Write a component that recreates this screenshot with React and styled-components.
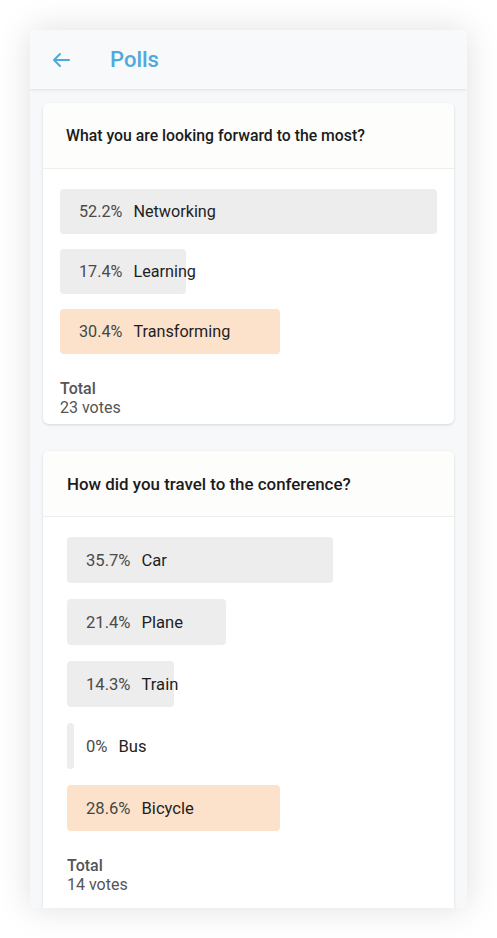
import React from "react";
import styled, { createGlobalStyle } from "styled-components";

const GlobalStyle = createGlobalStyle`
  html, body {
    margin: 0;
    padding: 0;
    background: #ffffff;
    font-family: Roboto, "Liberation Sans", Arial, sans-serif;
  }
`;

const polls = [
  {
    question: "What you are looking forward to the most?",
    votes: 23,
    pad: 17,
    headPad: 23,
    qSize: 15.8,
    textSize: 16.2,
    barHeight: 45,
    gap: 15,
    bottom: 7,
    maxWidth: 377,
    winner: "Transforming",
    options: [
      { label: "Networking", pct: 52.2 },
      { label: "Learning", pct: 17.4 },
      { label: "Transforming", pct: 30.4 },
    ],
  },
  {
    question: "How did you travel to the conference?",
    votes: 14,
    pad: 24,
    headPad: 24,
    qSize: 16.9,
    textSize: 16.6,
    barHeight: 46,
    gap: 16,
    bottom: 24,
    maxWidth: 266,
    winner: "Bicycle",
    options: [
      { label: "Car", pct: 35.7 },
      { label: "Plane", pct: 21.4 },
      { label: "Train", pct: 14.3 },
      { label: "Bus", pct: 0 },
      { label: "Bicycle", pct: 28.6 },
    ],
  },
];

const Page = styled.div`
  padding: 30px;
`;

const Phone = styled.div`
  width: 437px;
  height: 878px;
  overflow: hidden;
  background: #f7f8fa;
  box-shadow: 0 0 32px rgba(0, 0, 0, 0.13);
  display: flex;
  flex-direction: column;
`;

const Header = styled.header`
  height: 59px;
  flex-shrink: 0;
  background: #f8f9fb;
  display: flex;
  align-items: center;
  padding-left: 21px;
  gap: 39px;
  box-shadow: 0 1px 3px rgba(0, 0, 0, 0.1);
  position: relative;
  z-index: 1;
`;

const BackButton = styled.button`
  border: none;
  background: none;
  padding: 0;
  width: 20px;
  height: 20px;
  display: flex;
  align-items: center;
  justify-content: center;
  cursor: pointer;
`;

const Title = styled.h1`
  margin: 0;
  font-size: 22px;
  font-weight: 500;
  color: #4ea9dc;
`;

const Content = styled.main`
  padding: 14px 13px;
  display: flex;
  flex-direction: column;
  gap: 27px;
`;

const Card = styled.section`
  background: #ffffff;
  border-radius: 6px;
  box-shadow: 0 1px 3px rgba(0, 0, 0, 0.14);
`;

const CardHead = styled.div`
  height: 66px;
  box-sizing: border-box;
  padding: 0 ${(p) => p.$pad}px;
  display: flex;
  align-items: center;
  background: #fdfdfb;
  border-bottom: 1px solid #eeeeec;
  border-radius: 6px 6px 0 0;
`;

const Question = styled.h2`
  margin: 0;
  font-size: ${(p) => p.$size}px;
  font-weight: 500;
  color: #1b1b1b;
`;

const CardBody = styled.div`
  padding: 20px ${(p) => p.$pad}px ${(p) => p.$bottom}px;
`;

const Options = styled.div`
  display: flex;
  flex-direction: column;
  gap: ${(p) => p.$gap}px;
`;

const Option = styled.div`
  position: relative;
  height: ${(p) => p.$h}px;
  display: flex;
  align-items: center;
  padding-left: 19px;
  font-size: ${(p) => p.$size}px;
`;

const Fill = styled.div`
  position: absolute;
  left: 0;
  top: 0;
  bottom: 0;
  min-width: 7px;
  border-radius: 4px;
  background: ${(p) => (p.$win ? "#fde2cb" : "#ededed")};
`;

const Pct = styled.span`
  position: relative;
  color: ${(p) => (p.$win ? "#3f4847" : "#4a4a4a")};
  margin-right: 11px;
`;

const Label = styled.span`
  position: relative;
  color: #1e1e1e;
`;

const Total = styled.div`
  margin-top: 25px;
  font-size: 16px;
  color: #555555;
  line-height: 19px;
`;

const TotalLabel = styled.div`
  font-weight: 500;
`;

const ArrowIcon = () => (
  <svg width="20" height="20" viewBox="0 0 20 20" fill="none">
    <path
      d="M18 10H3M9 4L3 10L9 16"
      stroke="#4ea9dc"
      strokeWidth="2"
      strokeLinecap="round"
      strokeLinejoin="round"
    />
  </svg>
);

const Poll = ({ poll }) => {
  const max = Math.max(...poll.options.map((o) => o.pct));
  return (
    <Card>
      <CardHead $pad={poll.headPad}>
        <Question $size={poll.qSize}>{poll.question}</Question>
      </CardHead>
      <CardBody $pad={poll.pad} $bottom={poll.bottom}>
        <Options $gap={poll.gap}>
          {poll.options.map((o) => {
            const win = o.label === poll.winner;
            return (
              <Option key={o.label} $h={poll.barHeight} $size={poll.textSize}>
                <Fill
                  $win={win}
                  style={{ width: `${(o.pct / max) * poll.maxWidth}px` }}
                />
                <Pct $win={win}>
                  {o.pct === 0 ? "0%" : `${o.pct.toFixed(1)}%`}
                </Pct>
                <Label>{o.label}</Label>
              </Option>
            );
          })}
        </Options>
        <Total>
          <TotalLabel>Total</TotalLabel>
          <div>{poll.votes} votes</div>
        </Total>
      </CardBody>
    </Card>
  );
};

export default function App() {
  return (
    <Page>
      <GlobalStyle />
      <Phone>
        <Header>
          <BackButton aria-label="Back">
            <ArrowIcon />
          </BackButton>
          <Title>Polls</Title>
        </Header>
        <Content>
          {polls.map((p) => (
            <Poll key={p.question} poll={p} />
          ))}
        </Content>
      </Phone>
    </Page>
  );
}
